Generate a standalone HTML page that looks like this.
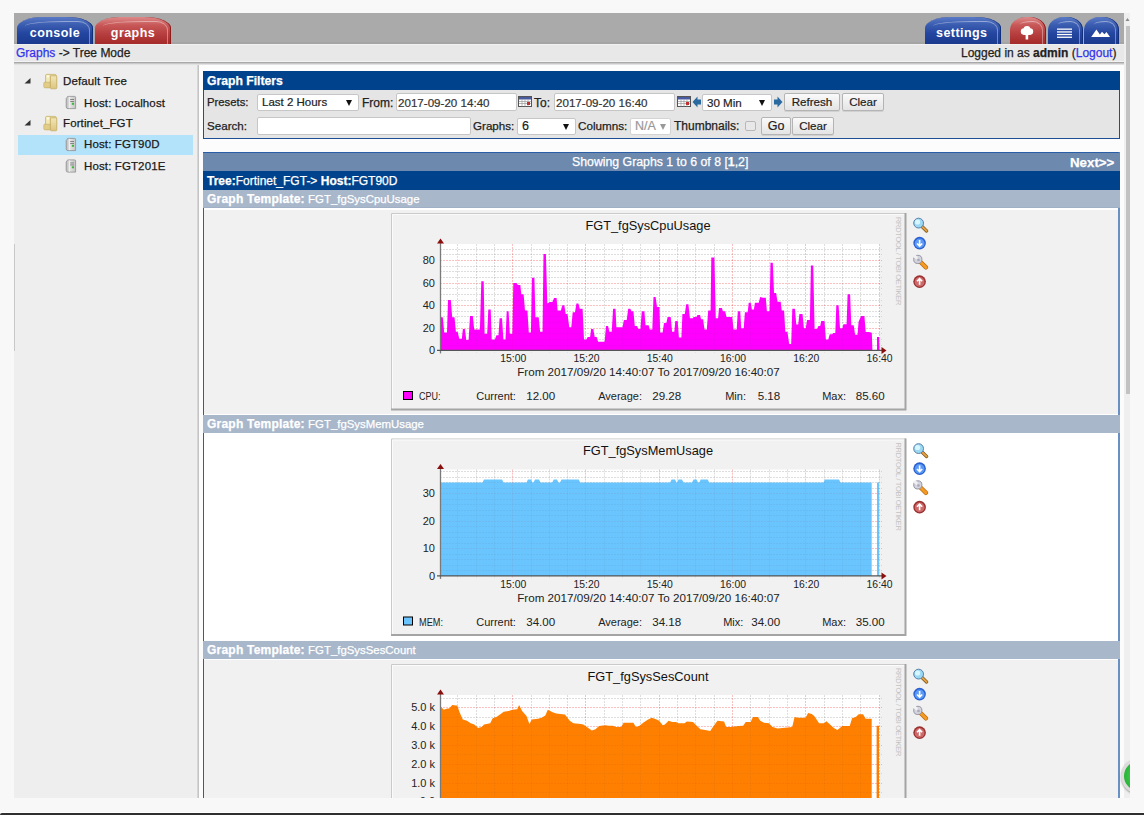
<!DOCTYPE html>
<html><head><meta charset="utf-8">
<style>
*{box-sizing:border-box}
html,body{margin:0;padding:0;width:1144px;height:815px;overflow:hidden;background:#f8f8f8;font-family:"Liberation Sans",sans-serif;}
.a{position:absolute;white-space:nowrap}
.t{position:absolute;white-space:nowrap;line-height:1;-webkit-text-stroke:0.25px currentColor}
#tabbar{left:14px;top:13px;width:1110px;height:31px;background:#aaaaaa;border-bottom:2px solid #a4a4a4}
#crumb{left:14px;top:44px;width:1110px;height:18px;background:#e8e8e8;border-top:1px solid #f0f0f0;border-bottom:1px solid #f3f3f3}
#shadow{left:14px;top:62px;width:1110px;height:3px;background:linear-gradient(#a8a8a8 0,#a8a8a8 1px,#c8c8c8 1px,#c8c8c8 2px,#e2e2e2 2px)}
#left{left:14px;top:65px;width:184px;height:733px;background:#eeeeee}
#leftb{left:197px;top:65px;width:2px;height:733px;background:#c4c4c4;border-left:1px solid #d6d6d6}
#main{left:199px;top:65px;width:925px;height:733px;background:#fcfcfc}
.tab{position:absolute;top:17px;height:27px;border-radius:26px 26px 0 0/11px 11px 0 0;color:#fff;font-weight:bold;font-size:12.5px;text-align:center;letter-spacing:0.45px;overflow:hidden}
.tab span{position:absolute;left:0;right:0;top:9.5px;line-height:1}
.blue{background:linear-gradient(#5a7ac6 0%,#3a5cb0 30%,#2446a0 60%,#1b3a8e 100%);box-shadow:inset -1px 0 0 #142f7a}
.red{background:linear-gradient(#de8a8a 0%,#c85858 30%,#b84040 60%,#a52a2a 100%);box-shadow:inset -1px 0 0 #8a1c1c}
.tab:before{content:"";position:absolute;left:8px;right:3.5px;top:3.5px;bottom:-2px;border-top:1.6px solid rgba(255,255,255,.42);border-right:1.6px solid rgba(255,255,255,.38);border-radius:40px 12px 0 0/5px 9px 0 0}
.sm{border-radius:16px 16px 0 0/13px 13px 0 0}
.sm:before{left:10px;border-radius:14px 11px 0 0/4px 10px 0 0}
.lbl{font-size:12px;color:#222}
.inp{position:absolute;-webkit-text-stroke:0.2px currentColor;background:#fff;border:1px solid #c6c6c6;border-radius:2px;font-size:12px;color:#333;padding-left:3px;line-height:15px}
.sel{position:absolute;-webkit-text-stroke:0.2px currentColor;background:#fff;border:1px solid #c6c6c6;border-radius:2px;font-size:12.5px;color:#222;padding-left:4px;line-height:15px}
.sel i{position:absolute;right:6px;top:4.5px;width:0;height:0;border-left:3.2px solid transparent;border-right:3.2px solid transparent;border-top:6.5px solid #111}
.btn{position:absolute;-webkit-text-stroke:0.2px currentColor;background:linear-gradient(#fafafa,#e4e4e4);border:1px solid #b4b4b4;border-radius:2px;font-size:12.5px;color:#222;text-align:center;line-height:16px;box-shadow:0 1px 0 #d0d0d0}
.hdr{position:absolute;left:203px;width:917px;color:#fff;font-size:12px}
.ti{position:absolute;font-size:11.5px;color:#1a1a1a;line-height:1;white-space:nowrap;-webkit-text-stroke:0.25px currentColor;letter-spacing:0.12px}
</style></head><body>
<div class="a" id="tabbar"></div>
<div class="tab blue" style="left:17px;width:76px"><span>console</span></div>
<div class="tab red" style="left:95px;width:76px"><span>graphs</span></div>
<div class="tab blue" style="left:925px;width:76px"><span style="left:-2.5px">settings</span></div>
<div class="tab red sm" style="left:1010px;width:36px"></div>
<div class="tab blue sm" style="left:1048px;width:35px"></div>
<div class="tab blue sm" style="left:1084px;width:35px"></div>
<svg class="a" style="left:1010px;top:17px" width="110" height="27" viewBox="0 0 110 27">
 <g fill="#fff">
  <circle cx="14" cy="14.5" r="3.2"/><circle cx="20" cy="14.5" r="3.2"/><circle cx="17" cy="12.3" r="3.4"/><ellipse cx="17" cy="15.5" rx="5" ry="2.6"/>
  <rect x="15.6" y="17.5" width="2.6" height="5"/>
  <rect x="47" y="11.5" width="15" height="1.3"/><rect x="47" y="14.3" width="15" height="1.3"/><rect x="47" y="16.9" width="15" height="1.3"/><rect x="47" y="19.6" width="15" height="1.3"/>
  <path d="M81.2 19.9 L86.4 12.6 L89.9 17.4 L92 14.8 L94.4 17.2 L96.5 15 L100 19.9 Z"/>
 </g>
</svg>
<div class="a" id="crumb"></div>
<div class="t lbl" style="left:16px;top:47px"><span style="color:#3333ee">Graphs</span> -&gt; Tree Mode</div>
<div class="t lbl" style="left:961px;top:47px">Logged in as <b>admin</b> (<span style="color:#3333ee">Logout</span>)</div>
<div class="a" id="shadow"></div>
<div class="a" id="left"></div>
<div class="a" id="leftb"></div>
<div class="a" id="main"></div>
<div class="a" style="left:14px;top:244px;width:1px;height:107px;background:#c8c8c8"></div>

<!-- tree -->
<div class="a" style="left:18px;top:135px;width:175px;height:20px;background:#b3e3fb"></div>
<svg class="a" style="left:14px;top:65px" width="184" height="120" viewBox="0 0 184 120">
 <defs>
  <linearGradient id="fg2" x1="0" x2="0" y1="0" y2="1"><stop offset="0" stop-color="#f2e7b8"/><stop offset="1" stop-color="#dcc47e"/></linearGradient>
  <linearGradient id="sg" x1="0" x2="1"><stop offset="0" stop-color="#b8b8b8"/><stop offset="0.4" stop-color="#e4e4e4"/><stop offset="1" stop-color="#c4c4c4"/></linearGradient>
 </defs>
 <g id="tri"><path d="M16.5 13 L16.5 18.5 L10.5 18.5 Z" fill="#333"/></g>
 <path d="M16.5 55 L16.5 60.5 L10.5 60.5 Z" fill="#333"/>
 <g id="fold">
  <rect x="31.6" y="9.4" width="10.8" height="12.5" rx="1.5" fill="#eadb9e" stroke="#c9b46c" stroke-width="0.8"/>
  <rect x="31.6" y="9.4" width="4.8" height="13.2" rx="1.2" fill="#f3e8b8" stroke="#cbb774" stroke-width="0.7"/>
  <rect x="29.8" y="17.2" width="6.6" height="5.6" rx="1" fill="#e2cd88" stroke="#c2a860" stroke-width="0.6"/>
  <rect x="32.8" y="10.4" width="2.2" height="2" fill="#fffbe8"/>
  <rect x="36.4" y="10.8" width="6.4" height="13" rx="1" fill="url(#fg2)" stroke="#c4ac64" stroke-width="0.8"/>
 </g>
 <use href="#fold" y="42"/>
 <g id="srv">
  <path d="M53.2 32.2 Q53.2 31.4 54.2 31.4 L60.6 31.4 Q61.6 31.4 61.6 32.4 L61.6 43.6 L54 43.6 Q52.2 43.6 52.2 41.8 L52.2 33.5 Z" fill="url(#sg)" stroke="#8e8e8e" stroke-width="0.8"/>
  <path d="M55.4 31.8 V43.2" stroke="#f4f4f4" stroke-width="0.8"/>
  <rect x="56.2" y="34" width="3.8" height="0.9" fill="#7a7a7a"/><rect x="56.2" y="36" width="3.8" height="0.9" fill="#7a7a7a"/>
  <rect x="57.8" y="37.8" width="2.2" height="2" fill="#3cb83c"/>
 </g>
 <use href="#srv" y="42"/>
 <use href="#srv" y="63.5"/>
</svg>
<div class="ti" style="left:63px;top:76px">Default Tree</div>
<div class="ti" style="left:84px;top:97.5px">Host: Localhost</div>
<div class="ti" style="left:63px;top:118px">Fortinet_FGT</div>
<div class="ti" style="left:84px;top:139.2px">Host: FGT90D</div>
<div class="ti" style="left:84px;top:160.8px">Host: FGT201E</div>

<!-- filter box -->
<div class="a" style="left:203px;top:71px;width:917px;height:68px;background:#e5e5e5;border:1px solid #1e4f96"></div>
<div class="a" style="left:203px;top:71px;width:917px;height:19px;background:#00438c"></div>
<div class="t" style="left:207px;top:74.8px;color:#fff;font-weight:bold;font-size:12.2px">Graph Filters</div>
<div class="t lbl" style="left:207px;top:97px;font-size:11.3px">Presets:</div>
<div class="sel" style="left:257px;top:94px;width:102px;height:17px"><span style="font-size:11.5px">Last 2 Hours</span><i></i></div>
<div class="t lbl" style="left:362px;top:97px">From:</div>
<div class="inp" style="left:396px;top:93px;width:121px;height:18px;padding-left:1px;font-size:11.6px;line-height:17px">2017-09-20 14:40</div>
<div class="t lbl" style="left:534px;top:97px">To:</div>
<div class="inp" style="left:554px;top:93px;width:121px;height:18px;padding-left:1px;font-size:11.6px;line-height:17px">2017-09-20 16:40</div>
<svg class="a" style="left:518px;top:96px" width="15" height="12" viewBox="0 0 15 12"><rect x="0.5" y="0.5" width="13" height="10" fill="#fff" stroke="#555"/><rect x="1" y="1" width="12" height="2.5" fill="#4a5aa0"/><path d="M1 5.5H13M1 7.5H13M4 3.5V10.5M7 3.5V10.5M10 3.5V10.5" stroke="#999" stroke-width="0.7"/><rect x="9" y="6" width="3" height="3" fill="#c03030"/></svg>
<svg class="a" style="left:677px;top:96px" width="15" height="12" viewBox="0 0 15 12"><rect x="0.5" y="0.5" width="13" height="10" fill="#fff" stroke="#555"/><rect x="1" y="1" width="12" height="2.5" fill="#4a5aa0"/><path d="M1 5.5H13M1 7.5H13M4 3.5V10.5M7 3.5V10.5M10 3.5V10.5" stroke="#999" stroke-width="0.7"/><rect x="9" y="6" width="3" height="3" fill="#c03030"/></svg>
<svg class="a" style="left:692px;top:96px" width="10" height="12" viewBox="0 0 10 12"><path d="M0.5 6 L5.5 0.5 L5.5 3.5 L9 3.5 L9 8.5 L5.5 8.5 L5.5 11.5 Z" fill="#2b6aa0"/></svg>
<div class="sel" style="left:702px;top:94px;width:70px;height:17px"><span style="font-size:11.6px">30 Min</span><i></i></div>
<svg class="a" style="left:773px;top:96px" width="10" height="12" viewBox="0 0 10 12"><path d="M9.5 6 L4.5 0.5 L4.5 3.5 L1 3.5 L1 8.5 L4.5 8.5 L4.5 11.5 Z" fill="#2b6aa0"/></svg>
<div class="btn" style="left:784px;top:93px;width:56px;height:18px;font-size:11.6px">Refresh</div>
<div class="btn" style="left:842px;top:93px;width:42px;height:18px;font-size:11.6px">Clear</div>

<div class="t lbl" style="left:207px;top:120.4px;font-size:11.6px">Search:</div>
<div class="inp" style="left:257px;top:117px;width:214px;height:18px"></div>
<div class="t lbl" style="left:473px;top:120.4px;font-size:11.6px">Graphs:</div>
<div class="sel" style="left:517px;top:118px;width:59px;height:17px">6<i></i></div>
<div class="t lbl" style="left:578px;top:120.4px;font-size:11.7px">Columns:</div>
<div class="sel" style="left:630px;top:118px;width:41px;height:17px;color:#999;border-color:#d4d4d4">N/A<i style="border-top-color:#999;right:4px"></i></div>
<div class="t lbl" style="left:674px;top:120.4px">Thumbnails:</div>
<div class="a" style="left:745px;top:121px;width:11px;height:10px;border:1px solid #b8b8b8;border-radius:2px;background:#e8e8e8"></div>
<div class="btn" style="left:761px;top:117px;width:30px;height:18px">Go</div>
<div class="btn" style="left:792px;top:117px;width:42px;height:18px;font-size:11.6px">Clear</div>

<!-- main box -->
<div class="a" style="left:203px;top:152px;width:917px;height:660px;border:1px solid #2a5ea6;border-right:2px solid #6890c4;background:#fff"></div>
<div class="hdr" style="top:153px;height:18px;background:#6d89ad"></div>
<div class="t" style="left:572px;top:156px;color:#fff;font-size:12.3px">Showing Graphs 1 to 6 of 8 [<b>1</b>,2]</div>
<div class="t" style="left:1070px;top:156px;color:#fff;font-size:13.3px;font-weight:bold">Next&gt;&gt;</div>
<div class="hdr" style="top:171px;height:19px;background:#00438c"></div>
<div class="t" style="left:207px;top:174.5px;color:#fff;font-size:12px"><b>Tree:</b>Fortinet_FGT-&gt; <b>Host:</b>FGT90D</div>
<div class="hdr" style="top:190px;height:18px;background:#a9b7cb;border-bottom:1px solid #9fb0c6"></div>
<div class="t" style="left:207px;top:193px;color:#fff;font-size:12px"><b style="letter-spacing:0.22px">Graph Template:</b> <span style="font-size:11.4px">FGT_fgSysCpuUsage</span></div>
<div class="a" style="left:204px;top:210px;width:914px;height:204px;background:#f1f1f1"></div>
<div class="hdr" style="top:415px;height:18px;background:#a9b7cb"></div>
<div class="t" style="left:207px;top:418px;color:#fff;font-size:12px"><b style="letter-spacing:0.22px">Graph Template:</b> <span style="font-size:11.4px">FGT_fgSysMemUsage</span></div>
<div class="hdr" style="top:641px;height:18px;background:#a9b7cb"></div>
<div class="t" style="left:207px;top:644px;color:#fff;font-size:12px"><b style="letter-spacing:0.22px">Graph Template:</b> <span style="font-size:11.4px">FGT_fgSysSesCount</span></div>
<div class="a" style="left:204px;top:659.5px;width:914px;height:140px;background:#f1f1f1"></div>
<svg class="a" style="left:0;top:0" width="1144" height="798" viewBox="0 0 1144 798" font-family='"Liberation Sans", sans-serif'>
<defs><clipPath id="c3"><rect x="0" y="658" width="1144" height="140"/></clipPath></defs>
<rect x="391" y="213" width="515" height="197" fill="#f1f1f1"/>
<path d="M391.5 410 V213.5 H906" stroke="#cacaca" stroke-width="1" fill="none"/>
<path d="M392.5 409 V214.5 H905" stroke="#fbfbfb" stroke-width="1" fill="none"/>
<path d="M391 409.5 H905.5 V213" stroke="#a4a4a4" stroke-width="2" fill="none"/>
<rect x="440" y="244" width="440" height="106.4" fill="#ffffff"/>
<g stroke-width="1"><line x1="440" x2="882" y1="345.5" y2="345.5" stroke="rgba(100,100,100,0.15)" stroke-dasharray="2 1"/><line x1="440" x2="882" y1="339.5" y2="339.5" stroke="rgba(100,100,100,0.15)" stroke-dasharray="2 1"/><line x1="440" x2="882" y1="333.5" y2="333.5" stroke="rgba(100,100,100,0.15)" stroke-dasharray="2 1"/><line x1="440" x2="882" y1="328.5" y2="328.5" stroke="rgba(255,0,0,0.2)" stroke-dasharray="2 1"/><line x1="440" x2="882" y1="322.5" y2="322.5" stroke="rgba(100,100,100,0.15)" stroke-dasharray="2 1"/><line x1="440" x2="882" y1="316.5" y2="316.5" stroke="rgba(100,100,100,0.15)" stroke-dasharray="2 1"/><line x1="440" x2="882" y1="311.5" y2="311.5" stroke="rgba(100,100,100,0.15)" stroke-dasharray="2 1"/><line x1="440" x2="882" y1="305.5" y2="305.5" stroke="rgba(255,0,0,0.2)" stroke-dasharray="2 1"/><line x1="440" x2="882" y1="300.5" y2="300.5" stroke="rgba(100,100,100,0.15)" stroke-dasharray="2 1"/><line x1="440" x2="882" y1="294.5" y2="294.5" stroke="rgba(100,100,100,0.15)" stroke-dasharray="2 1"/><line x1="440" x2="882" y1="288.5" y2="288.5" stroke="rgba(100,100,100,0.15)" stroke-dasharray="2 1"/><line x1="440" x2="882" y1="283.5" y2="283.5" stroke="rgba(255,0,0,0.2)" stroke-dasharray="2 1"/><line x1="440" x2="882" y1="277.5" y2="277.5" stroke="rgba(100,100,100,0.15)" stroke-dasharray="2 1"/><line x1="440" x2="882" y1="271.5" y2="271.5" stroke="rgba(100,100,100,0.15)" stroke-dasharray="2 1"/><line x1="440" x2="882" y1="266.5" y2="266.5" stroke="rgba(100,100,100,0.15)" stroke-dasharray="2 1"/><line x1="440" x2="882" y1="260.5" y2="260.5" stroke="rgba(255,0,0,0.2)" stroke-dasharray="2 1"/><line x1="440" x2="882" y1="254.5" y2="254.5" stroke="rgba(100,100,100,0.15)" stroke-dasharray="2 1"/><line x1="440" x2="882" y1="249.5" y2="249.5" stroke="rgba(100,100,100,0.15)" stroke-dasharray="2 1"/><line x1="457.5" x2="457.5" y1="244" y2="352.4" stroke="rgba(100,100,100,0.15)" stroke-dasharray="2 1"/><line x1="476.5" x2="476.5" y1="244" y2="352.4" stroke="rgba(100,100,100,0.15)" stroke-dasharray="2 1"/><line x1="494.5" x2="494.5" y1="244" y2="352.4" stroke="rgba(100,100,100,0.15)" stroke-dasharray="2 1"/><line x1="512.5" x2="512.5" y1="244" y2="352.4" stroke="rgba(255,0,0,0.2)" stroke-dasharray="2 1"/><line x1="531.5" x2="531.5" y1="244" y2="352.4" stroke="rgba(100,100,100,0.15)" stroke-dasharray="2 1"/><line x1="549.5" x2="549.5" y1="244" y2="352.4" stroke="rgba(100,100,100,0.15)" stroke-dasharray="2 1"/><line x1="567.5" x2="567.5" y1="244" y2="352.4" stroke="rgba(100,100,100,0.15)" stroke-dasharray="2 1"/><line x1="585.5" x2="585.5" y1="244" y2="352.4" stroke="rgba(255,0,0,0.2)" stroke-dasharray="2 1"/><line x1="604.5" x2="604.5" y1="244" y2="352.4" stroke="rgba(100,100,100,0.15)" stroke-dasharray="2 1"/><line x1="622.5" x2="622.5" y1="244" y2="352.4" stroke="rgba(100,100,100,0.15)" stroke-dasharray="2 1"/><line x1="640.5" x2="640.5" y1="244" y2="352.4" stroke="rgba(100,100,100,0.15)" stroke-dasharray="2 1"/><line x1="659.5" x2="659.5" y1="244" y2="352.4" stroke="rgba(255,0,0,0.2)" stroke-dasharray="2 1"/><line x1="677.5" x2="677.5" y1="244" y2="352.4" stroke="rgba(100,100,100,0.15)" stroke-dasharray="2 1"/><line x1="695.5" x2="695.5" y1="244" y2="352.4" stroke="rgba(100,100,100,0.15)" stroke-dasharray="2 1"/><line x1="714.5" x2="714.5" y1="244" y2="352.4" stroke="rgba(100,100,100,0.15)" stroke-dasharray="2 1"/><line x1="732.5" x2="732.5" y1="244" y2="352.4" stroke="rgba(255,0,0,0.2)" stroke-dasharray="2 1"/><line x1="750.5" x2="750.5" y1="244" y2="352.4" stroke="rgba(100,100,100,0.15)" stroke-dasharray="2 1"/><line x1="769.5" x2="769.5" y1="244" y2="352.4" stroke="rgba(100,100,100,0.15)" stroke-dasharray="2 1"/><line x1="787.5" x2="787.5" y1="244" y2="352.4" stroke="rgba(100,100,100,0.15)" stroke-dasharray="2 1"/><line x1="805.5" x2="805.5" y1="244" y2="352.4" stroke="rgba(255,0,0,0.2)" stroke-dasharray="2 1"/><line x1="824.5" x2="824.5" y1="244" y2="352.4" stroke="rgba(100,100,100,0.15)" stroke-dasharray="2 1"/><line x1="842.5" x2="842.5" y1="244" y2="352.4" stroke="rgba(100,100,100,0.15)" stroke-dasharray="2 1"/><line x1="860.5" x2="860.5" y1="244" y2="352.4" stroke="rgba(100,100,100,0.15)" stroke-dasharray="2 1"/><line x1="879.5" x2="879.5" y1="244" y2="352.4" stroke="rgba(255,0,0,0.2)" stroke-dasharray="2 1"/></g>
<path d="M440 350.4 L440.4 317.3 L442.8 317.3 L444.2 332.4 L447.0 332.4 L448.0 299.9 L450.8 299.9 L452.2 317.3 L454.5 317.3 L455.9 331.7 L457.6 331.7 L459.3 338.7 L461.8 338.7 L462.9 328.9 L464.9 328.9 L466.3 340.1 L468.6 340.1 L470.0 315.9 L472.8 315.9 L474.2 329.6 L479.9 329.6 L481.3 281.2 L483.7 281.2 L484.6 333.8 L487.2 333.8 L488.3 309.4 L490.7 309.4 L491.7 339.4 L494.9 339.4 L496.4 335.2 L498.5 335.2 L499.6 318.3 L502.0 318.3 L503.4 339.4 L505.5 339.4 L506.7 311.2 L508.6 311.2 L509.8 333.8 L512.3 333.8 L513.3 283.0 L516.5 283.0 L517.9 285.1 L520.3 285.1 L521.3 294.3 L523.6 294.3 L525.0 310.5 L527.4 310.5 L528.8 332.4 L530.9 332.4 L532.0 277.8 L534.4 277.8 L535.4 317.3 L538.7 317.3 L540.1 331.7 L542.5 331.7 L543.5 254.1 L545.9 254.1 L547.3 303.5 L549.9 302.1 L552.4 302.1 L554.1 298.1 L556.6 298.1 L557.6 310.5 L560.9 310.5 L562.3 305.2 L564.3 305.2 L565.7 314.0 L567.5 314.0 L569.3 327.2 L571.3 327.2 L572.7 312.2 L575.0 312.2 L576.4 303.5 L578.4 303.5 L579.8 308.8 L582.6 308.8 L584.0 339.4 L586.3 339.4 L587.7 337.0 L590.1 337.0 L591.1 328.9 L593.3 328.9 L594.7 337.0 L596.7 337.0 L598.1 341.8 L604.6 341.8 L606.0 326.0 L608.0 326.0 L609.4 331.7 L611.7 331.7 L613.1 308.8 L615.5 308.8 L616.4 327.2 L622.5 327.2 L623.9 320.1 L626.7 320.1 L628.2 308.8 L630.3 308.8 L631.4 311.2 L633.4 311.2 L634.8 326.0 L637.0 326.0 L638.4 328.9 L640.4 328.9 L641.8 311.2 L644.4 311.2 L645.5 325.3 L648.6 325.3 L649.9 329.6 L652.3 329.6 L653.5 297.1 L655.6 297.1 L657.0 307.0 L659.4 307.0 L660.2 332.4 L662.6 332.4 L664.0 322.9 L666.4 322.9 L667.6 316.9 L670.7 316.9 L672.1 331.7 L674.3 331.7 L675.3 321.1 L677.7 321.1 L678.9 337.6 L681.4 337.6 L682.4 314.0 L684.8 314.0 L686.2 304.2 L688.4 304.2 L689.9 318.3 L692.7 318.3 L693.7 316.9 L696.5 316.9 L697.5 315.0 L700.0 315.0 L701.1 319.3 L703.1 319.3 L704.5 329.6 L706.8 329.6 L708.2 310.5 L710.6 310.5 L711.3 257.6 L714.4 257.6 L715.8 318.3 L718.1 318.3 L719.0 308.0 L721.9 308.0 L722.9 311.2 L725.1 311.2 L726.5 316.9 L732.2 316.9 L733.6 329.6 L736.7 329.6 L737.8 311.2 L740.2 311.2 L741.2 328.2 L743.7 328.2 L744.9 312.2 L747.7 312.2 L748.7 302.8 L750.8 302.8 L751.9 309.4 L753.9 309.4 L754.9 302.8 L758.7 302.8 L760.2 297.1 L762.7 297.8 L765.8 297.8 L766.9 311.2 L769.5 311.2 L770.5 262.8 L772.8 262.8 L774.0 292.9 L776.1 292.9 L777.5 301.8 L780.7 301.8 L781.7 310.5 L784.1 310.5 L785.3 331.7 L787.4 331.7 L789.2 344.1 L791.2 344.1 L792.3 308.8 L794.9 308.8 L796.3 324.6 L798.2 324.6 L799.4 314.0 L802.5 314.0 L803.9 328.2 L805.7 328.2 L807.1 320.1 L809.9 320.1 L810.9 265.4 L813.2 265.4 L814.6 328.9 L817.0 328.9 L818.4 326.0 L820.2 326.0 L821.2 321.1 L824.5 321.1 L825.9 339.4 L828.3 339.4 L829.7 334.2 L832.1 334.2 L833.2 333.1 L835.3 333.1 L836.3 305.2 L838.6 305.2 L840.0 328.2 L842.4 328.2 L843.4 324.3 L846.6 324.3 L847.6 294.3 L850.1 294.3 L851.3 325.3 L853.7 325.3 L855.1 334.8 L857.5 334.8 L858.6 321.8 L861.1 315.9 L864.4 315.9 L865.7 332.0 L869.0 332.0 L871.8 332.8 L872.4 350.1 L872.4 350.4 Z M877.0 350.4 L877.0 336.9 L879.0 336.9 L879.5 350.4 Z" fill="#ff00ff"/>
<g stroke-width="1"><line x1="440" x2="882" y1="345.5" y2="345.5" stroke="rgba(60,60,60,0.06)" stroke-dasharray="2 1"/><line x1="440" x2="882" y1="339.5" y2="339.5" stroke="rgba(60,60,60,0.06)" stroke-dasharray="2 1"/><line x1="440" x2="882" y1="333.5" y2="333.5" stroke="rgba(60,60,60,0.06)" stroke-dasharray="2 1"/><line x1="440" x2="882" y1="328.5" y2="328.5" stroke="rgba(200,0,0,0.06)" stroke-dasharray="2 1"/><line x1="440" x2="882" y1="322.5" y2="322.5" stroke="rgba(60,60,60,0.06)" stroke-dasharray="2 1"/><line x1="440" x2="882" y1="316.5" y2="316.5" stroke="rgba(60,60,60,0.06)" stroke-dasharray="2 1"/><line x1="440" x2="882" y1="311.5" y2="311.5" stroke="rgba(60,60,60,0.06)" stroke-dasharray="2 1"/><line x1="440" x2="882" y1="305.5" y2="305.5" stroke="rgba(200,0,0,0.06)" stroke-dasharray="2 1"/><line x1="440" x2="882" y1="300.5" y2="300.5" stroke="rgba(60,60,60,0.06)" stroke-dasharray="2 1"/><line x1="440" x2="882" y1="294.5" y2="294.5" stroke="rgba(60,60,60,0.06)" stroke-dasharray="2 1"/><line x1="440" x2="882" y1="288.5" y2="288.5" stroke="rgba(60,60,60,0.06)" stroke-dasharray="2 1"/><line x1="440" x2="882" y1="283.5" y2="283.5" stroke="rgba(200,0,0,0.06)" stroke-dasharray="2 1"/><line x1="440" x2="882" y1="277.5" y2="277.5" stroke="rgba(60,60,60,0.06)" stroke-dasharray="2 1"/><line x1="440" x2="882" y1="271.5" y2="271.5" stroke="rgba(60,60,60,0.06)" stroke-dasharray="2 1"/><line x1="440" x2="882" y1="266.5" y2="266.5" stroke="rgba(60,60,60,0.06)" stroke-dasharray="2 1"/><line x1="440" x2="882" y1="260.5" y2="260.5" stroke="rgba(200,0,0,0.06)" stroke-dasharray="2 1"/><line x1="440" x2="882" y1="254.5" y2="254.5" stroke="rgba(60,60,60,0.06)" stroke-dasharray="2 1"/><line x1="440" x2="882" y1="249.5" y2="249.5" stroke="rgba(60,60,60,0.06)" stroke-dasharray="2 1"/><line x1="457.5" x2="457.5" y1="244" y2="352.4" stroke="rgba(60,60,60,0.06)" stroke-dasharray="2 1"/><line x1="476.5" x2="476.5" y1="244" y2="352.4" stroke="rgba(60,60,60,0.06)" stroke-dasharray="2 1"/><line x1="494.5" x2="494.5" y1="244" y2="352.4" stroke="rgba(60,60,60,0.06)" stroke-dasharray="2 1"/><line x1="512.5" x2="512.5" y1="244" y2="352.4" stroke="rgba(200,0,0,0.06)" stroke-dasharray="2 1"/><line x1="531.5" x2="531.5" y1="244" y2="352.4" stroke="rgba(60,60,60,0.06)" stroke-dasharray="2 1"/><line x1="549.5" x2="549.5" y1="244" y2="352.4" stroke="rgba(60,60,60,0.06)" stroke-dasharray="2 1"/><line x1="567.5" x2="567.5" y1="244" y2="352.4" stroke="rgba(60,60,60,0.06)" stroke-dasharray="2 1"/><line x1="585.5" x2="585.5" y1="244" y2="352.4" stroke="rgba(200,0,0,0.06)" stroke-dasharray="2 1"/><line x1="604.5" x2="604.5" y1="244" y2="352.4" stroke="rgba(60,60,60,0.06)" stroke-dasharray="2 1"/><line x1="622.5" x2="622.5" y1="244" y2="352.4" stroke="rgba(60,60,60,0.06)" stroke-dasharray="2 1"/><line x1="640.5" x2="640.5" y1="244" y2="352.4" stroke="rgba(60,60,60,0.06)" stroke-dasharray="2 1"/><line x1="659.5" x2="659.5" y1="244" y2="352.4" stroke="rgba(200,0,0,0.06)" stroke-dasharray="2 1"/><line x1="677.5" x2="677.5" y1="244" y2="352.4" stroke="rgba(60,60,60,0.06)" stroke-dasharray="2 1"/><line x1="695.5" x2="695.5" y1="244" y2="352.4" stroke="rgba(60,60,60,0.06)" stroke-dasharray="2 1"/><line x1="714.5" x2="714.5" y1="244" y2="352.4" stroke="rgba(60,60,60,0.06)" stroke-dasharray="2 1"/><line x1="732.5" x2="732.5" y1="244" y2="352.4" stroke="rgba(200,0,0,0.06)" stroke-dasharray="2 1"/><line x1="750.5" x2="750.5" y1="244" y2="352.4" stroke="rgba(60,60,60,0.06)" stroke-dasharray="2 1"/><line x1="769.5" x2="769.5" y1="244" y2="352.4" stroke="rgba(60,60,60,0.06)" stroke-dasharray="2 1"/><line x1="787.5" x2="787.5" y1="244" y2="352.4" stroke="rgba(60,60,60,0.06)" stroke-dasharray="2 1"/><line x1="805.5" x2="805.5" y1="244" y2="352.4" stroke="rgba(200,0,0,0.06)" stroke-dasharray="2 1"/><line x1="824.5" x2="824.5" y1="244" y2="352.4" stroke="rgba(60,60,60,0.06)" stroke-dasharray="2 1"/><line x1="842.5" x2="842.5" y1="244" y2="352.4" stroke="rgba(60,60,60,0.06)" stroke-dasharray="2 1"/><line x1="860.5" x2="860.5" y1="244" y2="352.4" stroke="rgba(60,60,60,0.06)" stroke-dasharray="2 1"/><line x1="879.5" x2="879.5" y1="244" y2="352.4" stroke="rgba(200,0,0,0.06)" stroke-dasharray="2 1"/></g>
<line x1="440.5" x2="440.5" y1="242" y2="353.4" stroke="#7a7a7a" stroke-width="1.3"/>
<path d="M437 243.5 L440.5 238.5 L444 243.5 Z" fill="#8b0f0f"/>
<line x1="437" x2="882" y1="350.4" y2="350.4" stroke="#555" stroke-width="1.3"/>
<path d="M881.5 346.9 L886.5 350.4 L881.5 353.9 Z" fill="#8b0f0f"/>
<text x="435" y="354.4" text-anchor="end" font-size="11" fill="#222">0</text>
<text x="435" y="331.8" text-anchor="end" font-size="11" fill="#222">20</text>
<text x="435" y="309.2" text-anchor="end" font-size="11" fill="#222">40</text>
<text x="435" y="286.6" text-anchor="end" font-size="11" fill="#222">60</text>
<text x="435" y="264.0" text-anchor="end" font-size="11" fill="#222">80</text>
<text x="513.2" y="362" text-anchor="middle" font-size="10.4" fill="#222">15:00</text>
<text x="586.5" y="362" text-anchor="middle" font-size="10.4" fill="#222">15:20</text>
<text x="659.7" y="362" text-anchor="middle" font-size="10.4" fill="#222">15:40</text>
<text x="733.0" y="362" text-anchor="middle" font-size="10.4" fill="#222">16:00</text>
<text x="806.3" y="362" text-anchor="middle" font-size="10.4" fill="#222">16:20</text>
<text x="879.6" y="362" text-anchor="middle" font-size="10.4" fill="#222">16:40</text>
<text x="648.5" y="376" text-anchor="middle" font-size="11.65" fill="#222">From 2017/09/20 14:40:07 To 2017/09/20 16:40:07</text>
<text x="648" y="229.5" text-anchor="middle" font-size="12.8" fill="#111">FGT_fgSysCpuUsage</text>
<text transform="translate(895.5 217) rotate(90)" font-size="7.5" fill="#c2c2c2" letter-spacing="-0.3">RRDTOOL / TOBI OETIKER</text>
<rect x="403.5" y="391.5" width="9" height="8" fill="#ff00ff" stroke="#000" stroke-width="1"/>
<text x="419" y="400" font-size="11" fill="#222" textLength="21.5" lengthAdjust="spacingAndGlyphs">CPU:</text>
<text x="476.2" y="400" font-size="11" fill="#222">Current:</text>
<text x="526.2" y="400" font-size="11.6" fill="#222">12.00</text>
<text x="598.2" y="400" font-size="11" fill="#222">Average:</text>
<text x="652.2" y="400" font-size="11.6" fill="#222">29.28</text>
<text x="725.2" y="400" font-size="11" fill="#222">Min:</text>
<text x="757.7" y="400" font-size="11.6" fill="#222">5.18</text>
<text x="822.2" y="400" font-size="11" fill="#222">Max:</text>
<text x="855.7" y="400" font-size="11.6" fill="#222">85.60</text>
<g transform="translate(913 217.5)"><line x1="9" y1="9" x2="13.6" y2="13.4" stroke="#7a5a20" stroke-width="3.4" stroke-linecap="round"/><line x1="9" y1="9" x2="13.6" y2="13.4" stroke="#e8a040" stroke-width="2" stroke-linecap="round"/><circle cx="5.6" cy="5.6" r="4.9" fill="#9ad8f4" stroke="#5a7fa8" stroke-width="1"/><circle cx="4.6" cy="4.5" r="2.6" fill="#d8f6ff"/></g>
<g transform="translate(913 236.5)"><circle cx="6.6" cy="6.6" r="6.3" fill="#2a5fd0"/><circle cx="6.6" cy="6.9" r="4.9" fill="#5a9af6"/><path d="M6.6 3.5 V9.5 M4 7 L6.6 9.6 L9.2 7" stroke="#fff" stroke-width="1.6" fill="none"/></g>
<g transform="translate(913 255)"><line x1="7" y1="6.5" x2="13" y2="12.3" stroke="#b86a10" stroke-width="4.4" stroke-linecap="round"/><line x1="7" y1="6.5" x2="13" y2="12.3" stroke="#f59a22" stroke-width="3" stroke-linecap="round"/><circle cx="4.8" cy="4.4" r="4.1" fill="#d4d4de" stroke="#8c8c9c" stroke-width="0.9"/><path d="M-0.5 1.5 L2.5 -0.5 L5 2.5 L3.5 4.5 Z" fill="#f1f1f1"/><circle cx="5.5" cy="5" r="1.3" fill="#a8a8b8"/></g>
<g transform="translate(913 275)"><circle cx="6.6" cy="6.6" r="6.3" fill="#9a3030"/><circle cx="6.6" cy="6.9" r="4.9" fill="#cf6a6a"/><path d="M6.6 9.8 V3.8 M4 6.3 L6.6 3.7 L9.2 6.3" stroke="#fff" stroke-width="1.6" fill="none"/></g>
<rect x="391" y="438.5" width="515" height="197" fill="#f1f1f1"/>
<path d="M391.5 635.5 V439.0 H906" stroke="#cacaca" stroke-width="1" fill="none"/>
<path d="M392.5 634.5 V440.0 H905" stroke="#fbfbfb" stroke-width="1" fill="none"/>
<path d="M391 635.0 H905.5 V438.5" stroke="#a4a4a4" stroke-width="2" fill="none"/>
<rect x="440" y="469.5" width="440" height="106.4" fill="#ffffff"/>
<g stroke-width="1"><line x1="440" x2="882" y1="570.5" y2="570.5" stroke="rgba(100,100,100,0.15)" stroke-dasharray="2 1"/><line x1="440" x2="882" y1="565.5" y2="565.5" stroke="rgba(100,100,100,0.15)" stroke-dasharray="2 1"/><line x1="440" x2="882" y1="559.5" y2="559.5" stroke="rgba(100,100,100,0.15)" stroke-dasharray="2 1"/><line x1="440" x2="882" y1="554.5" y2="554.5" stroke="rgba(100,100,100,0.15)" stroke-dasharray="2 1"/><line x1="440" x2="882" y1="548.5" y2="548.5" stroke="rgba(255,0,0,0.2)" stroke-dasharray="2 1"/><line x1="440" x2="882" y1="543.5" y2="543.5" stroke="rgba(100,100,100,0.15)" stroke-dasharray="2 1"/><line x1="440" x2="882" y1="537.5" y2="537.5" stroke="rgba(100,100,100,0.15)" stroke-dasharray="2 1"/><line x1="440" x2="882" y1="532.5" y2="532.5" stroke="rgba(100,100,100,0.15)" stroke-dasharray="2 1"/><line x1="440" x2="882" y1="526.5" y2="526.5" stroke="rgba(100,100,100,0.15)" stroke-dasharray="2 1"/><line x1="440" x2="882" y1="521.5" y2="521.5" stroke="rgba(255,0,0,0.2)" stroke-dasharray="2 1"/><line x1="440" x2="882" y1="515.5" y2="515.5" stroke="rgba(100,100,100,0.15)" stroke-dasharray="2 1"/><line x1="440" x2="882" y1="510.5" y2="510.5" stroke="rgba(100,100,100,0.15)" stroke-dasharray="2 1"/><line x1="440" x2="882" y1="504.5" y2="504.5" stroke="rgba(100,100,100,0.15)" stroke-dasharray="2 1"/><line x1="440" x2="882" y1="499.5" y2="499.5" stroke="rgba(100,100,100,0.15)" stroke-dasharray="2 1"/><line x1="440" x2="882" y1="493.5" y2="493.5" stroke="rgba(255,0,0,0.2)" stroke-dasharray="2 1"/><line x1="440" x2="882" y1="488.5" y2="488.5" stroke="rgba(100,100,100,0.15)" stroke-dasharray="2 1"/><line x1="440" x2="882" y1="482.5" y2="482.5" stroke="rgba(100,100,100,0.15)" stroke-dasharray="2 1"/><line x1="440" x2="882" y1="477.5" y2="477.5" stroke="rgba(100,100,100,0.15)" stroke-dasharray="2 1"/><line x1="440" x2="882" y1="471.5" y2="471.5" stroke="rgba(100,100,100,0.15)" stroke-dasharray="2 1"/><line x1="457.5" x2="457.5" y1="469.5" y2="577.9" stroke="rgba(100,100,100,0.15)" stroke-dasharray="2 1"/><line x1="476.5" x2="476.5" y1="469.5" y2="577.9" stroke="rgba(100,100,100,0.15)" stroke-dasharray="2 1"/><line x1="494.5" x2="494.5" y1="469.5" y2="577.9" stroke="rgba(100,100,100,0.15)" stroke-dasharray="2 1"/><line x1="512.5" x2="512.5" y1="469.5" y2="577.9" stroke="rgba(255,0,0,0.2)" stroke-dasharray="2 1"/><line x1="531.5" x2="531.5" y1="469.5" y2="577.9" stroke="rgba(100,100,100,0.15)" stroke-dasharray="2 1"/><line x1="549.5" x2="549.5" y1="469.5" y2="577.9" stroke="rgba(100,100,100,0.15)" stroke-dasharray="2 1"/><line x1="567.5" x2="567.5" y1="469.5" y2="577.9" stroke="rgba(100,100,100,0.15)" stroke-dasharray="2 1"/><line x1="585.5" x2="585.5" y1="469.5" y2="577.9" stroke="rgba(255,0,0,0.2)" stroke-dasharray="2 1"/><line x1="604.5" x2="604.5" y1="469.5" y2="577.9" stroke="rgba(100,100,100,0.15)" stroke-dasharray="2 1"/><line x1="622.5" x2="622.5" y1="469.5" y2="577.9" stroke="rgba(100,100,100,0.15)" stroke-dasharray="2 1"/><line x1="640.5" x2="640.5" y1="469.5" y2="577.9" stroke="rgba(100,100,100,0.15)" stroke-dasharray="2 1"/><line x1="659.5" x2="659.5" y1="469.5" y2="577.9" stroke="rgba(255,0,0,0.2)" stroke-dasharray="2 1"/><line x1="677.5" x2="677.5" y1="469.5" y2="577.9" stroke="rgba(100,100,100,0.15)" stroke-dasharray="2 1"/><line x1="695.5" x2="695.5" y1="469.5" y2="577.9" stroke="rgba(100,100,100,0.15)" stroke-dasharray="2 1"/><line x1="714.5" x2="714.5" y1="469.5" y2="577.9" stroke="rgba(100,100,100,0.15)" stroke-dasharray="2 1"/><line x1="732.5" x2="732.5" y1="469.5" y2="577.9" stroke="rgba(255,0,0,0.2)" stroke-dasharray="2 1"/><line x1="750.5" x2="750.5" y1="469.5" y2="577.9" stroke="rgba(100,100,100,0.15)" stroke-dasharray="2 1"/><line x1="769.5" x2="769.5" y1="469.5" y2="577.9" stroke="rgba(100,100,100,0.15)" stroke-dasharray="2 1"/><line x1="787.5" x2="787.5" y1="469.5" y2="577.9" stroke="rgba(100,100,100,0.15)" stroke-dasharray="2 1"/><line x1="805.5" x2="805.5" y1="469.5" y2="577.9" stroke="rgba(255,0,0,0.2)" stroke-dasharray="2 1"/><line x1="824.5" x2="824.5" y1="469.5" y2="577.9" stroke="rgba(100,100,100,0.15)" stroke-dasharray="2 1"/><line x1="842.5" x2="842.5" y1="469.5" y2="577.9" stroke="rgba(100,100,100,0.15)" stroke-dasharray="2 1"/><line x1="860.5" x2="860.5" y1="469.5" y2="577.9" stroke="rgba(100,100,100,0.15)" stroke-dasharray="2 1"/><line x1="879.5" x2="879.5" y1="469.5" y2="577.9" stroke="rgba(255,0,0,0.2)" stroke-dasharray="2 1"/></g>
<path d="M440 575.9 L440 482.5 L482.5 482.5 L484 479.5 L502 479.5 L503.5 482.5 L526.5 482.5 L528 479.5 L531 479.5 L532.5 482.5 L533.5 482.5 L535 479.5 L539 479.5 L540.5 482.5 L552.2 482.5 L553.7 479.5 L557 479.5 L558.5 482.5 L560.0 482.5 L561.5 479.5 L578.7 479.5 L580.2 482.5 L670.1 482.5 L671.6 479.5 L675 479.5 L676.5 482.5 L677.0 482.5 L678.5 479.5 L682 479.5 L683.5 482.5 L692.0 482.5 L693.5 479.5 L696.6 479.5 L698.1 482.5 L699.2 482.5 L700.7 479.5 L707.7 479.5 L709.2 482.5 L823.4 482.5 L824.9 479.5 L839 479.5 L840.5 482.5 L871.7 482.5 L871.7 575.9 Z M877 575.9 L877 482.5 L879 482.5 L879 575.9 Z" fill="#6ac5fe"/>
<g stroke-width="1"><line x1="440" x2="882" y1="570.5" y2="570.5" stroke="rgba(60,60,60,0.06)" stroke-dasharray="2 1"/><line x1="440" x2="882" y1="565.5" y2="565.5" stroke="rgba(60,60,60,0.06)" stroke-dasharray="2 1"/><line x1="440" x2="882" y1="559.5" y2="559.5" stroke="rgba(60,60,60,0.06)" stroke-dasharray="2 1"/><line x1="440" x2="882" y1="554.5" y2="554.5" stroke="rgba(60,60,60,0.06)" stroke-dasharray="2 1"/><line x1="440" x2="882" y1="548.5" y2="548.5" stroke="rgba(200,0,0,0.06)" stroke-dasharray="2 1"/><line x1="440" x2="882" y1="543.5" y2="543.5" stroke="rgba(60,60,60,0.06)" stroke-dasharray="2 1"/><line x1="440" x2="882" y1="537.5" y2="537.5" stroke="rgba(60,60,60,0.06)" stroke-dasharray="2 1"/><line x1="440" x2="882" y1="532.5" y2="532.5" stroke="rgba(60,60,60,0.06)" stroke-dasharray="2 1"/><line x1="440" x2="882" y1="526.5" y2="526.5" stroke="rgba(60,60,60,0.06)" stroke-dasharray="2 1"/><line x1="440" x2="882" y1="521.5" y2="521.5" stroke="rgba(200,0,0,0.06)" stroke-dasharray="2 1"/><line x1="440" x2="882" y1="515.5" y2="515.5" stroke="rgba(60,60,60,0.06)" stroke-dasharray="2 1"/><line x1="440" x2="882" y1="510.5" y2="510.5" stroke="rgba(60,60,60,0.06)" stroke-dasharray="2 1"/><line x1="440" x2="882" y1="504.5" y2="504.5" stroke="rgba(60,60,60,0.06)" stroke-dasharray="2 1"/><line x1="440" x2="882" y1="499.5" y2="499.5" stroke="rgba(60,60,60,0.06)" stroke-dasharray="2 1"/><line x1="440" x2="882" y1="493.5" y2="493.5" stroke="rgba(200,0,0,0.06)" stroke-dasharray="2 1"/><line x1="440" x2="882" y1="488.5" y2="488.5" stroke="rgba(60,60,60,0.06)" stroke-dasharray="2 1"/><line x1="440" x2="882" y1="482.5" y2="482.5" stroke="rgba(60,60,60,0.06)" stroke-dasharray="2 1"/><line x1="440" x2="882" y1="477.5" y2="477.5" stroke="rgba(60,60,60,0.06)" stroke-dasharray="2 1"/><line x1="440" x2="882" y1="471.5" y2="471.5" stroke="rgba(60,60,60,0.06)" stroke-dasharray="2 1"/><line x1="457.5" x2="457.5" y1="469.5" y2="577.9" stroke="rgba(60,60,60,0.06)" stroke-dasharray="2 1"/><line x1="476.5" x2="476.5" y1="469.5" y2="577.9" stroke="rgba(60,60,60,0.06)" stroke-dasharray="2 1"/><line x1="494.5" x2="494.5" y1="469.5" y2="577.9" stroke="rgba(60,60,60,0.06)" stroke-dasharray="2 1"/><line x1="512.5" x2="512.5" y1="469.5" y2="577.9" stroke="rgba(200,0,0,0.06)" stroke-dasharray="2 1"/><line x1="531.5" x2="531.5" y1="469.5" y2="577.9" stroke="rgba(60,60,60,0.06)" stroke-dasharray="2 1"/><line x1="549.5" x2="549.5" y1="469.5" y2="577.9" stroke="rgba(60,60,60,0.06)" stroke-dasharray="2 1"/><line x1="567.5" x2="567.5" y1="469.5" y2="577.9" stroke="rgba(60,60,60,0.06)" stroke-dasharray="2 1"/><line x1="585.5" x2="585.5" y1="469.5" y2="577.9" stroke="rgba(200,0,0,0.06)" stroke-dasharray="2 1"/><line x1="604.5" x2="604.5" y1="469.5" y2="577.9" stroke="rgba(60,60,60,0.06)" stroke-dasharray="2 1"/><line x1="622.5" x2="622.5" y1="469.5" y2="577.9" stroke="rgba(60,60,60,0.06)" stroke-dasharray="2 1"/><line x1="640.5" x2="640.5" y1="469.5" y2="577.9" stroke="rgba(60,60,60,0.06)" stroke-dasharray="2 1"/><line x1="659.5" x2="659.5" y1="469.5" y2="577.9" stroke="rgba(200,0,0,0.06)" stroke-dasharray="2 1"/><line x1="677.5" x2="677.5" y1="469.5" y2="577.9" stroke="rgba(60,60,60,0.06)" stroke-dasharray="2 1"/><line x1="695.5" x2="695.5" y1="469.5" y2="577.9" stroke="rgba(60,60,60,0.06)" stroke-dasharray="2 1"/><line x1="714.5" x2="714.5" y1="469.5" y2="577.9" stroke="rgba(60,60,60,0.06)" stroke-dasharray="2 1"/><line x1="732.5" x2="732.5" y1="469.5" y2="577.9" stroke="rgba(200,0,0,0.06)" stroke-dasharray="2 1"/><line x1="750.5" x2="750.5" y1="469.5" y2="577.9" stroke="rgba(60,60,60,0.06)" stroke-dasharray="2 1"/><line x1="769.5" x2="769.5" y1="469.5" y2="577.9" stroke="rgba(60,60,60,0.06)" stroke-dasharray="2 1"/><line x1="787.5" x2="787.5" y1="469.5" y2="577.9" stroke="rgba(60,60,60,0.06)" stroke-dasharray="2 1"/><line x1="805.5" x2="805.5" y1="469.5" y2="577.9" stroke="rgba(200,0,0,0.06)" stroke-dasharray="2 1"/><line x1="824.5" x2="824.5" y1="469.5" y2="577.9" stroke="rgba(60,60,60,0.06)" stroke-dasharray="2 1"/><line x1="842.5" x2="842.5" y1="469.5" y2="577.9" stroke="rgba(60,60,60,0.06)" stroke-dasharray="2 1"/><line x1="860.5" x2="860.5" y1="469.5" y2="577.9" stroke="rgba(60,60,60,0.06)" stroke-dasharray="2 1"/><line x1="879.5" x2="879.5" y1="469.5" y2="577.9" stroke="rgba(200,0,0,0.06)" stroke-dasharray="2 1"/></g>
<line x1="440.5" x2="440.5" y1="467.5" y2="578.9" stroke="#7a7a7a" stroke-width="1.3"/>
<path d="M437 469.0 L440.5 464.0 L444 469.0 Z" fill="#8b0f0f"/>
<line x1="437" x2="882" y1="575.9" y2="575.9" stroke="#555" stroke-width="1.3"/>
<path d="M881.5 572.4 L886.5 575.9 L881.5 579.4 Z" fill="#8b0f0f"/>
<text x="435" y="579.9" text-anchor="end" font-size="11" fill="#222">0</text>
<text x="435" y="552.3" text-anchor="end" font-size="11" fill="#222">10</text>
<text x="435" y="524.7" text-anchor="end" font-size="11" fill="#222">20</text>
<text x="435" y="497.1" text-anchor="end" font-size="11" fill="#222">30</text>
<text x="513.2" y="587.5" text-anchor="middle" font-size="10.4" fill="#222">15:00</text>
<text x="586.5" y="587.5" text-anchor="middle" font-size="10.4" fill="#222">15:20</text>
<text x="659.7" y="587.5" text-anchor="middle" font-size="10.4" fill="#222">15:40</text>
<text x="733.0" y="587.5" text-anchor="middle" font-size="10.4" fill="#222">16:00</text>
<text x="806.3" y="587.5" text-anchor="middle" font-size="10.4" fill="#222">16:20</text>
<text x="879.6" y="587.5" text-anchor="middle" font-size="10.4" fill="#222">16:40</text>
<text x="648.5" y="601.5" text-anchor="middle" font-size="11.65" fill="#222">From 2017/09/20 14:40:07 To 2017/09/20 16:40:07</text>
<text x="648" y="455.0" text-anchor="middle" font-size="12.8" fill="#111">FGT_fgSysMemUsage</text>
<text transform="translate(895.5 442.5) rotate(90)" font-size="7.5" fill="#c2c2c2" letter-spacing="-0.3">RRDTOOL / TOBI OETIKER</text>
<rect x="403.5" y="617.0" width="9" height="8" fill="#6ac5fe" stroke="#000" stroke-width="1"/>
<text x="419" y="625.5" font-size="11" fill="#222" textLength="24" lengthAdjust="spacingAndGlyphs">MEM:</text>
<text x="476.2" y="625.5" font-size="11" fill="#222">Current:</text>
<text x="526.2" y="625.5" font-size="11.6" fill="#222">34.00</text>
<text x="598.2" y="625.5" font-size="11" fill="#222">Average:</text>
<text x="652.2" y="625.5" font-size="11.6" fill="#222">34.18</text>
<text x="723.2" y="625.5" font-size="11" fill="#222">Mix:</text>
<text x="751.2" y="625.5" font-size="11.6" fill="#222">34.00</text>
<text x="822.2" y="625.5" font-size="11" fill="#222">Max:</text>
<text x="855.7" y="625.5" font-size="11.6" fill="#222">35.00</text>
<g transform="translate(913 443.0)"><line x1="9" y1="9" x2="13.6" y2="13.4" stroke="#7a5a20" stroke-width="3.4" stroke-linecap="round"/><line x1="9" y1="9" x2="13.6" y2="13.4" stroke="#e8a040" stroke-width="2" stroke-linecap="round"/><circle cx="5.6" cy="5.6" r="4.9" fill="#9ad8f4" stroke="#5a7fa8" stroke-width="1"/><circle cx="4.6" cy="4.5" r="2.6" fill="#d8f6ff"/></g>
<g transform="translate(913 462.0)"><circle cx="6.6" cy="6.6" r="6.3" fill="#2a5fd0"/><circle cx="6.6" cy="6.9" r="4.9" fill="#5a9af6"/><path d="M6.6 3.5 V9.5 M4 7 L6.6 9.6 L9.2 7" stroke="#fff" stroke-width="1.6" fill="none"/></g>
<g transform="translate(913 480.5)"><line x1="7" y1="6.5" x2="13" y2="12.3" stroke="#b86a10" stroke-width="4.4" stroke-linecap="round"/><line x1="7" y1="6.5" x2="13" y2="12.3" stroke="#f59a22" stroke-width="3" stroke-linecap="round"/><circle cx="4.8" cy="4.4" r="4.1" fill="#d4d4de" stroke="#8c8c9c" stroke-width="0.9"/><path d="M-0.5 1.5 L2.5 -0.5 L5 2.5 L3.5 4.5 Z" fill="#f1f1f1"/><circle cx="5.5" cy="5" r="1.3" fill="#a8a8b8"/></g>
<g transform="translate(913 500.5)"><circle cx="6.6" cy="6.6" r="6.3" fill="#9a3030"/><circle cx="6.6" cy="6.9" r="4.9" fill="#cf6a6a"/><path d="M6.6 9.8 V3.8 M4 6.3 L6.6 3.7 L9.2 6.3" stroke="#fff" stroke-width="1.6" fill="none"/></g>
<g clip-path="url(#c3)">
<rect x="391" y="664" width="515" height="197" fill="#f1f1f1"/>
<path d="M391.5 861 V664.5 H906" stroke="#cacaca" stroke-width="1" fill="none"/>
<path d="M392.5 860 V665.5 H905" stroke="#fbfbfb" stroke-width="1" fill="none"/>
<path d="M391 860.5 H905.5 V664" stroke="#a4a4a4" stroke-width="2" fill="none"/>
<rect x="440" y="695" width="440" height="106.4" fill="#ffffff"/>
<g stroke-width="1"><line x1="440" x2="882" y1="792.5" y2="792.5" stroke="rgba(100,100,100,0.15)" stroke-dasharray="2 1"/><line x1="440" x2="882" y1="783.5" y2="783.5" stroke="rgba(255,0,0,0.2)" stroke-dasharray="2 1"/><line x1="440" x2="882" y1="773.5" y2="773.5" stroke="rgba(100,100,100,0.15)" stroke-dasharray="2 1"/><line x1="440" x2="882" y1="764.5" y2="764.5" stroke="rgba(255,0,0,0.2)" stroke-dasharray="2 1"/><line x1="440" x2="882" y1="754.5" y2="754.5" stroke="rgba(100,100,100,0.15)" stroke-dasharray="2 1"/><line x1="440" x2="882" y1="745.5" y2="745.5" stroke="rgba(255,0,0,0.2)" stroke-dasharray="2 1"/><line x1="440" x2="882" y1="735.5" y2="735.5" stroke="rgba(100,100,100,0.15)" stroke-dasharray="2 1"/><line x1="440" x2="882" y1="726.5" y2="726.5" stroke="rgba(255,0,0,0.2)" stroke-dasharray="2 1"/><line x1="440" x2="882" y1="717.5" y2="717.5" stroke="rgba(100,100,100,0.15)" stroke-dasharray="2 1"/><line x1="440" x2="882" y1="707.5" y2="707.5" stroke="rgba(255,0,0,0.2)" stroke-dasharray="2 1"/><line x1="440" x2="882" y1="698.5" y2="698.5" stroke="rgba(100,100,100,0.15)" stroke-dasharray="2 1"/><line x1="457.5" x2="457.5" y1="695" y2="803.4" stroke="rgba(100,100,100,0.15)" stroke-dasharray="2 1"/><line x1="476.5" x2="476.5" y1="695" y2="803.4" stroke="rgba(100,100,100,0.15)" stroke-dasharray="2 1"/><line x1="494.5" x2="494.5" y1="695" y2="803.4" stroke="rgba(100,100,100,0.15)" stroke-dasharray="2 1"/><line x1="512.5" x2="512.5" y1="695" y2="803.4" stroke="rgba(255,0,0,0.2)" stroke-dasharray="2 1"/><line x1="531.5" x2="531.5" y1="695" y2="803.4" stroke="rgba(100,100,100,0.15)" stroke-dasharray="2 1"/><line x1="549.5" x2="549.5" y1="695" y2="803.4" stroke="rgba(100,100,100,0.15)" stroke-dasharray="2 1"/><line x1="567.5" x2="567.5" y1="695" y2="803.4" stroke="rgba(100,100,100,0.15)" stroke-dasharray="2 1"/><line x1="585.5" x2="585.5" y1="695" y2="803.4" stroke="rgba(255,0,0,0.2)" stroke-dasharray="2 1"/><line x1="604.5" x2="604.5" y1="695" y2="803.4" stroke="rgba(100,100,100,0.15)" stroke-dasharray="2 1"/><line x1="622.5" x2="622.5" y1="695" y2="803.4" stroke="rgba(100,100,100,0.15)" stroke-dasharray="2 1"/><line x1="640.5" x2="640.5" y1="695" y2="803.4" stroke="rgba(100,100,100,0.15)" stroke-dasharray="2 1"/><line x1="659.5" x2="659.5" y1="695" y2="803.4" stroke="rgba(255,0,0,0.2)" stroke-dasharray="2 1"/><line x1="677.5" x2="677.5" y1="695" y2="803.4" stroke="rgba(100,100,100,0.15)" stroke-dasharray="2 1"/><line x1="695.5" x2="695.5" y1="695" y2="803.4" stroke="rgba(100,100,100,0.15)" stroke-dasharray="2 1"/><line x1="714.5" x2="714.5" y1="695" y2="803.4" stroke="rgba(100,100,100,0.15)" stroke-dasharray="2 1"/><line x1="732.5" x2="732.5" y1="695" y2="803.4" stroke="rgba(255,0,0,0.2)" stroke-dasharray="2 1"/><line x1="750.5" x2="750.5" y1="695" y2="803.4" stroke="rgba(100,100,100,0.15)" stroke-dasharray="2 1"/><line x1="769.5" x2="769.5" y1="695" y2="803.4" stroke="rgba(100,100,100,0.15)" stroke-dasharray="2 1"/><line x1="787.5" x2="787.5" y1="695" y2="803.4" stroke="rgba(100,100,100,0.15)" stroke-dasharray="2 1"/><line x1="805.5" x2="805.5" y1="695" y2="803.4" stroke="rgba(255,0,0,0.2)" stroke-dasharray="2 1"/><line x1="824.5" x2="824.5" y1="695" y2="803.4" stroke="rgba(100,100,100,0.15)" stroke-dasharray="2 1"/><line x1="842.5" x2="842.5" y1="695" y2="803.4" stroke="rgba(100,100,100,0.15)" stroke-dasharray="2 1"/><line x1="860.5" x2="860.5" y1="695" y2="803.4" stroke="rgba(100,100,100,0.15)" stroke-dasharray="2 1"/><line x1="879.5" x2="879.5" y1="695" y2="803.4" stroke="rgba(255,0,0,0.2)" stroke-dasharray="2 1"/></g>
<path d="M440 801.4 L440 706.6 L440.8 706.6 L443.7 709.8 L447.4 708.5 L449.1 708.5 L452.3 704.9 L456.0 705.6 L457.2 705.6 L459.6 712.2 L462.8 719.5 L467.0 720.8 L470.7 723.2 L474.3 724.4 L478.0 728.1 L481.7 726.9 L484.1 724.4 L490.2 723.2 L492.7 718.3 L496.4 717.1 L500.0 714.6 L503.7 711.7 L508.6 711.0 L512.3 709.8 L517.2 709.3 L519.1 704.9 L522.1 711.0 L526.5 715.9 L529.4 723.9 L531.8 719.5 L538.0 718.8 L541.6 717.8 L545.3 715.4 L547.8 709.8 L552.6 712.2 L556.3 713.4 L562.4 714.2 L564.9 714.6 L569.8 720.8 L573.4 723.2 L580.8 723.9 L583.2 724.4 L586.9 726.9 L591.8 730.6 L595.5 729.3 L599.1 726.1 L605.3 725.2 L608.9 725.7 L612.6 725.7 L616.3 726.9 L621.2 726.9 L623.6 722.7 L633.4 722.7 L635.9 726.9 L639.5 725.7 L643.2 722.7 L648.1 719.5 L651.8 717.8 L656.7 719.5 L659.1 720.8 L662.8 725.2 L664.9 724.4 L668.6 720.8 L672.2 722.0 L675.9 722.0 L678.4 723.2 L684.5 723.2 L686.9 721.5 L693.0 722.0 L696.7 725.7 L700.4 729.3 L705.3 730.1 L710.2 731.0 L713.8 725.7 L717.5 720.8 L724.1 721.5 L726.1 726.9 L731.0 726.9 L738.3 726.1 L743.2 725.7 L745.7 722.0 L750.6 722.0 L753.0 717.1 L757.9 717.1 L760.3 720.8 L764.0 722.7 L768.9 723.2 L772.6 726.9 L777.5 728.6 L782.4 728.1 L787.3 727.4 L792.2 726.9 L794.6 717.1 L798.3 717.8 L805.6 717.8 L808.1 712.9 L811.7 713.9 L814.2 715.9 L816.6 719.5 L819.1 723.2 L824.0 723.2 L826.4 721.3 L830.1 724.4 L833.8 728.1 L837.4 730.1 L842.3 726.1 L849.7 726.1 L852.1 718.3 L855.8 717.1 L858.7 714.2 L863.1 714.2 L865.6 718.8 L871.7 718.8 L871.7 801.4 Z M876.6 801.4 L876.6 725.7 L879.0 725.7 L879.0 801.4 Z" fill="#ff7f00"/>
<g stroke-width="1"><line x1="440" x2="882" y1="792.5" y2="792.5" stroke="rgba(60,60,60,0.06)" stroke-dasharray="2 1"/><line x1="440" x2="882" y1="783.5" y2="783.5" stroke="rgba(200,0,0,0.06)" stroke-dasharray="2 1"/><line x1="440" x2="882" y1="773.5" y2="773.5" stroke="rgba(60,60,60,0.06)" stroke-dasharray="2 1"/><line x1="440" x2="882" y1="764.5" y2="764.5" stroke="rgba(200,0,0,0.06)" stroke-dasharray="2 1"/><line x1="440" x2="882" y1="754.5" y2="754.5" stroke="rgba(60,60,60,0.06)" stroke-dasharray="2 1"/><line x1="440" x2="882" y1="745.5" y2="745.5" stroke="rgba(200,0,0,0.06)" stroke-dasharray="2 1"/><line x1="440" x2="882" y1="735.5" y2="735.5" stroke="rgba(60,60,60,0.06)" stroke-dasharray="2 1"/><line x1="440" x2="882" y1="726.5" y2="726.5" stroke="rgba(200,0,0,0.06)" stroke-dasharray="2 1"/><line x1="440" x2="882" y1="717.5" y2="717.5" stroke="rgba(60,60,60,0.06)" stroke-dasharray="2 1"/><line x1="440" x2="882" y1="707.5" y2="707.5" stroke="rgba(200,0,0,0.06)" stroke-dasharray="2 1"/><line x1="440" x2="882" y1="698.5" y2="698.5" stroke="rgba(60,60,60,0.06)" stroke-dasharray="2 1"/><line x1="457.5" x2="457.5" y1="695" y2="803.4" stroke="rgba(60,60,60,0.06)" stroke-dasharray="2 1"/><line x1="476.5" x2="476.5" y1="695" y2="803.4" stroke="rgba(60,60,60,0.06)" stroke-dasharray="2 1"/><line x1="494.5" x2="494.5" y1="695" y2="803.4" stroke="rgba(60,60,60,0.06)" stroke-dasharray="2 1"/><line x1="512.5" x2="512.5" y1="695" y2="803.4" stroke="rgba(200,0,0,0.06)" stroke-dasharray="2 1"/><line x1="531.5" x2="531.5" y1="695" y2="803.4" stroke="rgba(60,60,60,0.06)" stroke-dasharray="2 1"/><line x1="549.5" x2="549.5" y1="695" y2="803.4" stroke="rgba(60,60,60,0.06)" stroke-dasharray="2 1"/><line x1="567.5" x2="567.5" y1="695" y2="803.4" stroke="rgba(60,60,60,0.06)" stroke-dasharray="2 1"/><line x1="585.5" x2="585.5" y1="695" y2="803.4" stroke="rgba(200,0,0,0.06)" stroke-dasharray="2 1"/><line x1="604.5" x2="604.5" y1="695" y2="803.4" stroke="rgba(60,60,60,0.06)" stroke-dasharray="2 1"/><line x1="622.5" x2="622.5" y1="695" y2="803.4" stroke="rgba(60,60,60,0.06)" stroke-dasharray="2 1"/><line x1="640.5" x2="640.5" y1="695" y2="803.4" stroke="rgba(60,60,60,0.06)" stroke-dasharray="2 1"/><line x1="659.5" x2="659.5" y1="695" y2="803.4" stroke="rgba(200,0,0,0.06)" stroke-dasharray="2 1"/><line x1="677.5" x2="677.5" y1="695" y2="803.4" stroke="rgba(60,60,60,0.06)" stroke-dasharray="2 1"/><line x1="695.5" x2="695.5" y1="695" y2="803.4" stroke="rgba(60,60,60,0.06)" stroke-dasharray="2 1"/><line x1="714.5" x2="714.5" y1="695" y2="803.4" stroke="rgba(60,60,60,0.06)" stroke-dasharray="2 1"/><line x1="732.5" x2="732.5" y1="695" y2="803.4" stroke="rgba(200,0,0,0.06)" stroke-dasharray="2 1"/><line x1="750.5" x2="750.5" y1="695" y2="803.4" stroke="rgba(60,60,60,0.06)" stroke-dasharray="2 1"/><line x1="769.5" x2="769.5" y1="695" y2="803.4" stroke="rgba(60,60,60,0.06)" stroke-dasharray="2 1"/><line x1="787.5" x2="787.5" y1="695" y2="803.4" stroke="rgba(60,60,60,0.06)" stroke-dasharray="2 1"/><line x1="805.5" x2="805.5" y1="695" y2="803.4" stroke="rgba(200,0,0,0.06)" stroke-dasharray="2 1"/><line x1="824.5" x2="824.5" y1="695" y2="803.4" stroke="rgba(60,60,60,0.06)" stroke-dasharray="2 1"/><line x1="842.5" x2="842.5" y1="695" y2="803.4" stroke="rgba(60,60,60,0.06)" stroke-dasharray="2 1"/><line x1="860.5" x2="860.5" y1="695" y2="803.4" stroke="rgba(60,60,60,0.06)" stroke-dasharray="2 1"/><line x1="879.5" x2="879.5" y1="695" y2="803.4" stroke="rgba(200,0,0,0.06)" stroke-dasharray="2 1"/></g>
<line x1="440.5" x2="440.5" y1="693" y2="804.4" stroke="#7a7a7a" stroke-width="1.3"/>
<path d="M437 694.5 L440.5 689.5 L444 694.5 Z" fill="#8b0f0f"/>
<line x1="437" x2="882" y1="801.4" y2="801.4" stroke="#555" stroke-width="1.3"/>
<path d="M881.5 797.9 L886.5 801.4 L881.5 804.9 Z" fill="#8b0f0f"/>
<text x="435" y="805.4" text-anchor="end" font-size="11" fill="#222">0.0</text>
<text x="435" y="786.5" text-anchor="end" font-size="11" fill="#222">1.0 k</text>
<text x="435" y="767.7" text-anchor="end" font-size="11" fill="#222">2.0 k</text>
<text x="435" y="748.9" text-anchor="end" font-size="11" fill="#222">3.0 k</text>
<text x="435" y="730.0" text-anchor="end" font-size="11" fill="#222">4.0 k</text>
<text x="435" y="711.1" text-anchor="end" font-size="11" fill="#222">5.0 k</text>
<text x="513.2" y="813" text-anchor="middle" font-size="10.4" fill="#222">15:00</text>
<text x="586.5" y="813" text-anchor="middle" font-size="10.4" fill="#222">15:20</text>
<text x="659.7" y="813" text-anchor="middle" font-size="10.4" fill="#222">15:40</text>
<text x="733.0" y="813" text-anchor="middle" font-size="10.4" fill="#222">16:00</text>
<text x="806.3" y="813" text-anchor="middle" font-size="10.4" fill="#222">16:20</text>
<text x="879.6" y="813" text-anchor="middle" font-size="10.4" fill="#222">16:40</text>
<text x="648.5" y="827" text-anchor="middle" font-size="11.65" fill="#222">From 2017/09/20 14:40:07 To 2017/09/20 16:40:07</text>
<text x="648" y="680.5" text-anchor="middle" font-size="12.8" fill="#111">FGT_fgSysSesCount</text>
<text transform="translate(895.5 668) rotate(90)" font-size="7.5" fill="#c2c2c2" letter-spacing="-0.3">RRDTOOL / TOBI OETIKER</text>
<rect x="403.5" y="842.5" width="9" height="8" fill="#ff7f00" stroke="#000" stroke-width="1"/>
<text x="419" y="851" font-size="11" fill="#222" textLength="22" lengthAdjust="spacingAndGlyphs">SES:</text>
<text x="476.2" y="851" font-size="11" fill="#222">Current:</text>
<text x="526.2" y="851" font-size="11.6" fill="#222">4000</text>
<text x="598.2" y="851" font-size="11" fill="#222">Average:</text>
<text x="652.2" y="851" font-size="11.6" fill="#222">4300</text>
<text x="725.2" y="851" font-size="11" fill="#222">Min:</text>
<text x="757.7" y="851" font-size="11.6" fill="#222">3800</text>
<text x="822.2" y="851" font-size="11" fill="#222">Max:</text>
<text x="855.7" y="851" font-size="11.6" fill="#222">5100</text>
<g transform="translate(913 668.5)"><line x1="9" y1="9" x2="13.6" y2="13.4" stroke="#7a5a20" stroke-width="3.4" stroke-linecap="round"/><line x1="9" y1="9" x2="13.6" y2="13.4" stroke="#e8a040" stroke-width="2" stroke-linecap="round"/><circle cx="5.6" cy="5.6" r="4.9" fill="#9ad8f4" stroke="#5a7fa8" stroke-width="1"/><circle cx="4.6" cy="4.5" r="2.6" fill="#d8f6ff"/></g>
<g transform="translate(913 687.5)"><circle cx="6.6" cy="6.6" r="6.3" fill="#2a5fd0"/><circle cx="6.6" cy="6.9" r="4.9" fill="#5a9af6"/><path d="M6.6 3.5 V9.5 M4 7 L6.6 9.6 L9.2 7" stroke="#fff" stroke-width="1.6" fill="none"/></g>
<g transform="translate(913 706)"><line x1="7" y1="6.5" x2="13" y2="12.3" stroke="#b86a10" stroke-width="4.4" stroke-linecap="round"/><line x1="7" y1="6.5" x2="13" y2="12.3" stroke="#f59a22" stroke-width="3" stroke-linecap="round"/><circle cx="4.8" cy="4.4" r="4.1" fill="#d4d4de" stroke="#8c8c9c" stroke-width="0.9"/><path d="M-0.5 1.5 L2.5 -0.5 L5 2.5 L3.5 4.5 Z" fill="#f1f1f1"/><circle cx="5.5" cy="5" r="1.3" fill="#a8a8b8"/></g>
<g transform="translate(913 726)"><circle cx="6.6" cy="6.6" r="6.3" fill="#9a3030"/><circle cx="6.6" cy="6.9" r="4.9" fill="#cf6a6a"/><path d="M6.6 9.8 V3.8 M4 6.3 L6.6 3.7 L9.2 6.3" stroke="#fff" stroke-width="1.6" fill="none"/></g>
</g>
</svg>
<!-- scrollbar -->
<div class="a" style="left:1124px;top:13px;width:6px;height:785px;background:#efefef"></div>
<div class="a" style="left:1126px;top:26px;width:4px;height:368px;background:#c2c2c2"></div>
<svg class="a" style="left:1124px;top:15px" width="7" height="8"><path d="M1.5 6 L3.5 3 L5.5 6Z" fill="#888"/></svg>
<!-- green circle partially visible -->
<div class="a" style="left:1119px;top:755px;width:11px;height:42px;overflow:hidden"><div style="position:absolute;left:2px;top:3px;width:36px;height:36px;border-radius:50%;background:#dcdcdc;box-shadow:0 1px 2px rgba(0,0,0,.35)"><div style="position:absolute;left:3px;top:3px;width:30px;height:30px;border-radius:50%;background:radial-gradient(circle at 60% 50%,#5fdc6a,#2cb83c 70%,#1f9a2e)"></div></div></div>
<!-- bottom -->
<div class="a" style="left:0;top:798px;width:1144px;height:14px;background:#f8f8f8"></div>
<div class="a" style="left:0;top:812px;width:1144px;height:1px;background:#fff"></div>
<div class="a" style="left:0;top:813px;width:1144px;height:2px;background:#303030;border-radius:2px 0 0 0"></div>
</body></html>
